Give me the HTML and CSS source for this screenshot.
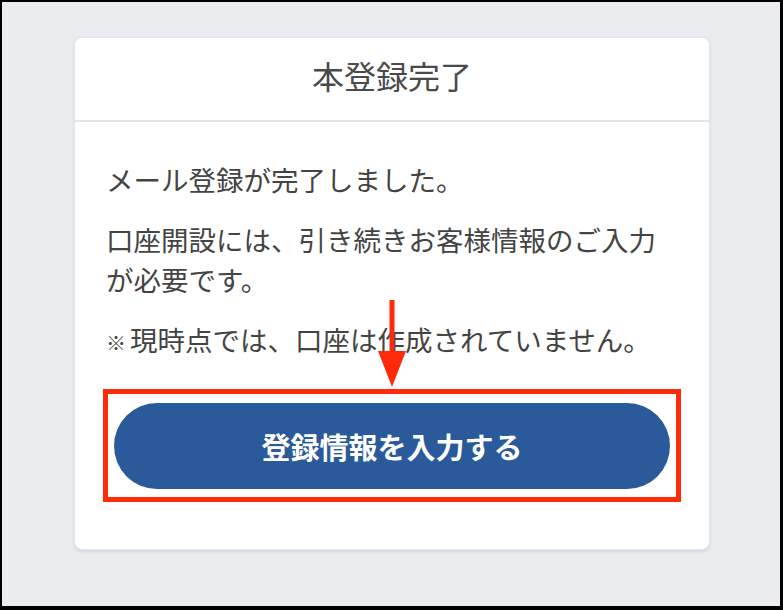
FILE: index.html
```html
<!DOCTYPE html>
<html lang="ja">
<head>
    <meta charset="UTF-8">
    <meta name="viewport" content="width=device-width, initial-scale=1.0">
    <title>本登録完了</title>
    <link rel="stylesheet" href="styles.css">
</head>
<body>
    <div class="frame">
        <div class="card">
            <div class="card-header">
                <h1>本登録完了</h1>
            </div>
            <div class="card-body">
                <p>メール登録が完了しました。</p>
                <p>口座開設には、引き続きお客様情報のご入力が必要です。</p>
                <p><span class="note-mark">※</span>現時点では、口座は作成されていません。</p>

                <div class="highlight">
                    <!-- annotation arrow -->
                    <svg class="arrow" width="28" height="88" viewBox="0 0 28 88">
                        <rect x="11.5" y="0" width="5" height="54" fill="#fe2a0a"/>
                        <polygon points="0,51 28,51 14,87" fill="#fe2a0a"/>
                    </svg>
                    <button class="btn-primary">登録情報を入力する</button>
                </div>
            </div>
        </div>
    </div>
</body>
</html>
```

FILE: styles.css
```css
html, body {
    margin: 0;
    padding: 0;
}
body {
    font-family: 'Noto Sans CJK JP', 'Noto Sans', sans-serif;
    color: #444;
}
.frame {
    box-sizing: border-box;
    width: 783px;
    height: 610px;
    border-style: solid;
    border-color: #000;
    border-width: 2px 3px 4px 2px;
    background: #ebecef;
    padding: 35px 0 0 72px;
}
.card {
    box-sizing: border-box;
    width: 636px;
    height: 513px;
    background: #fff;
    border-radius: 8px;
    border: 1px solid #e3e6ea;
    box-shadow: 0 2px 3px rgba(40, 60, 90, 0.12);
}
.card-header {
    box-sizing: border-box;
    height: 84px;
    padding-bottom: 8px;
    display: flex;
    align-items: center;
    justify-content: center;
    border-bottom: 2px solid #e1e6ec;
}
.card-header h1 {
    margin: 0;
    font-size: 32px;
    font-weight: 400;
    color: #4a4a4a;
    line-height: 1;
}
.card-body {
    padding: 37px 31px 0 31px;
}
.card-body p {
    margin: 0 0 20px 0;
    font-size: 27.5px;
    line-height: 40px;
}
.note-mark {
    font-size: 20px;
    font-weight: 700;
    margin-right: 4px;
}
.highlight {
    position: relative;
    margin: 26px -3px 0 -3px;
    border: 5px solid #fe2a0a;
    padding: 9px 6px 8px 6px;
}
.arrow {
    position: absolute;
    left: 50%;
    bottom: calc(100% + 6px);
    transform: translateX(-50%);
}
.btn-primary {
    display: block;
    width: 100%;
    height: 86px;
    border: none;
    border-radius: 43px;
    background: #2a5a9a;
    color: #fff;
    font-family: 'Noto Sans CJK JP', sans-serif;
    font-size: 29px;
    font-weight: 700;
    cursor: pointer;
}
```
